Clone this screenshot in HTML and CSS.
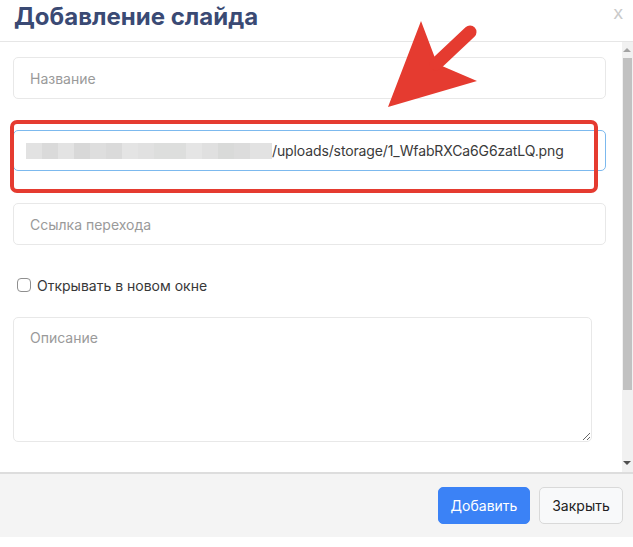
FILE: index.html
```html
<!DOCTYPE html>
<html lang="ru">
<head>
<meta charset="utf-8">
<title>Добавление слайда</title>
<link rel="stylesheet" href="styles.css">
</head>
<body>
<div class="modal">
  <div class="header">
    <h1 class="title">Добавление слайда</h1>
    <span class="close">x</span>
  </div>
  <div class="body">
    <div class="content">
      <input class="field" type="text" placeholder="Название">
      <div class="field field-focus">
        <span class="mosaic"></span><span class="url">/uploads/storage/1_WfabRXCa6G6zatLQ.png</span>
      </div>
      <input class="field" type="text" placeholder="Ссылка перехода">
      <label class="check-row"><span class="checkbox"></span>Открывать в новом окне</label>
      <textarea class="area" placeholder="Описание"></textarea>
    </div>
    <div class="scrollbar">
      <span class="sb-up"></span>
      <span class="sb-track"><span class="sb-thumb"></span></span>
      <span class="sb-down"></span>
    </div>
  </div>
  <div class="footer">
    <button class="btn btn-primary">Добавить</button>
    <button class="btn btn-light">Закрыть</button>
  </div>

  <div class="highlight"></div>
  <svg class="arrow" width="100" height="100" viewBox="0 0 100 100">
    <polygon points="8,92 41,6 55,43 62,51 97,66" fill="#e53b30"/>
    <line x1="56" y1="49" x2="90" y2="17" stroke="#e53b30" stroke-width="13" stroke-linecap="round"/>
  </svg>
</div>
</body>
</html>
```

FILE: styles.css
```css
* { box-sizing: border-box; }
html, body { margin: 0; padding: 0; background: #fff; }
body { font-family: Inter, "Noto Sans", "Liberation Sans", sans-serif; }

.modal {
  position: relative;
  width: 633px;
  height: 547px;
  background: #fff;
  overflow: hidden;
}

.header {
  height: 42px;
  border-bottom: 1px solid #e6e6e6;
  display: flex;
  justify-content: space-between;
  align-items: flex-start;
  padding: 0 10px 0 14px;
}
.title {
  margin: 1px 0 0;
  font-size: 24px;
  line-height: 32px;
  font-weight: 700;
  color: #3a4a74;
  letter-spacing: 0;
}
.close {
  margin-top: 1px;
  font-size: 19px;
  line-height: 24px;
  color: #cacaca;
  font-family: "Liberation Sans", sans-serif;
}

.body {
  height: 430px;
  display: flex;
}
.content {
  flex: 1;
  padding: 15px 16px 0 13px;
  display: flex;
  flex-direction: column;
  align-items: flex-start;
}

.field {
  width: 593px;
  height: 42px;
  border: 1px solid #e8e8e8;
  border-radius: 5px;
  padding: 0 16px;
  font-family: inherit;
  font-size: 14px;
  color: #333;
  background: #fff;
  outline: none;
  margin: 0 0 31px;
}
.field::placeholder { color: #9a9a9a; }

.field-focus {
  height: 41px;
  border-color: #7cb9ee;
  display: flex;
  align-items: center;
  padding: 0 12px;
  margin-bottom: 32px;
}
.mosaic {
  width: 246px;
  height: 16px;
  flex: none;
  background: linear-gradient(to right,
    #e2e2e2 0 16px, #dadada 16px 32px, #e3e3e3 32px 48px, #d8d8d8 48px 64px,
    #dedede 64px 80px, #dadada 80px 96px, #e4e4e4 96px 112px, #e1e1e1 112px 128px,
    #dddedd 128px 160px, #e5e5e5 160px 176px, #e0e0e0 176px 192px, #d9dad9 192px 208px,
    #dcdcdc 208px 224px, #e2e2e2 224px 246px);
}
.url {
  font-size: 14px;
  color: #3a3a3a;
  white-space: nowrap;
  letter-spacing: -0.12px;
}

.check-row {
  display: flex;
  align-items: center;
  margin: 0 0 0 4px;
  font-size: 14px;
  color: #383838;
  height: 18px;
}
.checkbox {
  width: 14px;
  height: 14px;
  border: 1px solid #8f8f8f;
  border-radius: 4px;
  margin-right: 6px;
  background: #fff;
}

.area {
  margin-top: 23px;
  width: 579px;
  height: 125px;
  border: 1px solid #e8e8e8;
  border-radius: 5px;
  padding: 11px 16px;
  font-family: inherit;
  font-size: 14px;
  resize: vertical;
  outline: none;
}
.area::placeholder { color: #9a9a9a; }

.scrollbar {
  width: 11px;
  background: #f1f1f1;
  display: flex;
  flex-direction: column;
  align-items: center;
}
.sb-up, .sb-down {
  height: 16px;
  width: 11px;
  position: relative;
}
.sb-up::after, .sb-down::after {
  content: "";
  position: absolute;
  left: 1px;
  border-left: 4.5px solid transparent;
  border-right: 4.5px solid transparent;
}
.sb-up::after { top: 6px; border-bottom: 4px solid #a3a3a3; }
.sb-down::after { top: 5px; border-top: 4px solid #505050; }
.sb-track {
  flex: 1;
  width: 11px;
  padding: 0 1px;
}
.sb-thumb {
  display: block;
  width: 9px;
  height: 332px;
  background: #c1c1c1;
}

.footer {
  height: 65px;
  background: #f4f4f4;
  border-top: 2px solid #dddddd;
  display: flex;
  justify-content: flex-end;
  align-items: flex-start;
  gap: 9px;
  padding: 13px 10px 0 0;
}
.btn {
  height: 37px;
  border-radius: 5px;
  font-family: inherit;
  font-size: 14px;
  padding: 0;
  cursor: pointer;
}
.btn-primary {
  width: 92px;
  background: #3b82f6;
  border: 1px solid #3b82f6;
  color: #fff;
}
.btn-light {
  width: 84px;
  background: #f8f9fa;
  border: 1px solid #d9d9d9;
  color: #222;
}

.highlight {
  position: absolute;
  left: 10px;
  top: 120px;
  width: 588px;
  height: 73px;
  border: 4px solid #e53b30;
  border-radius: 7px;
}
.arrow {
  position: absolute;
  left: 380px;
  top: 15px;
}
```
